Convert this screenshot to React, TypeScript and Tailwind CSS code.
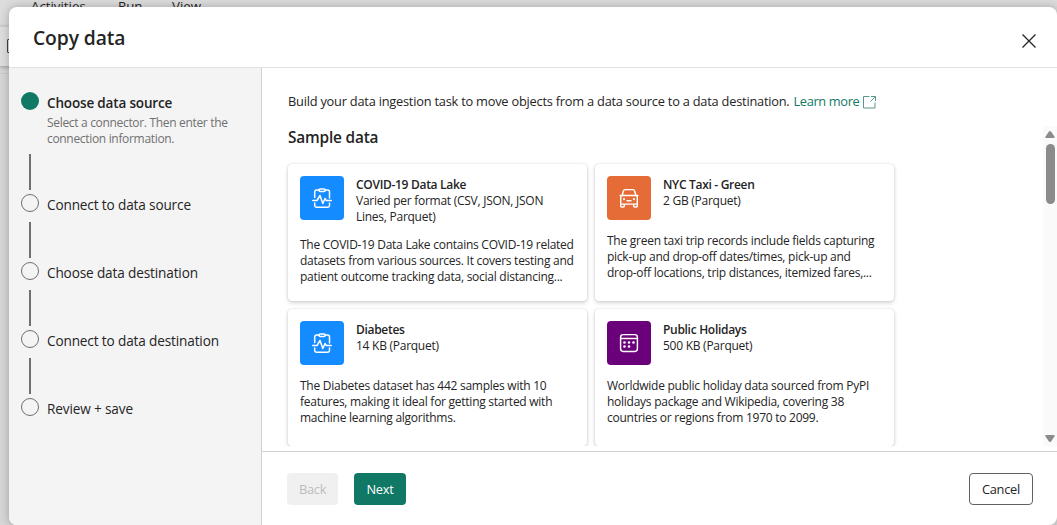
import React from "react";

function ClipboardPulse() {
  return (
    <svg width="20" height="20" viewBox="0 0 20 20" fill="none" stroke="white" strokeWidth="1.5" strokeLinejoin="round" strokeLinecap="round">
      <rect x="7" y="0.9" width="6.2" height="2.5" rx="1.2" />
      <path d="M7 2.100H4.500A1.800 1.800 0 0 0 2.700 3.900V9.500M13.200 2.100h2.500a1.800 1.800 0 0 1 1.800 1.800V10M2.700 15v2.500a1.700 1.700 0 0 0 1.700 1.700h11.400a1.700 1.700 0 0 0 1.700-1.700V15" />
      <path d="M.8 12.500h4.200L8 7.500l2.800 8 2.200-5 1.300 2h5" />
    </svg>
  );
}

function Taxi() {
  return (
    <svg width="20" height="20" viewBox="0 0 20 20" fill="none" stroke="white" strokeWidth="1.45" strokeLinejoin="round" strokeLinecap="round">
      <path d="M3.300 7 4.300 3.300A2.200 2.200 0 0 1 6.400 1.600h7.200A2.200 2.200 0 0 1 15.700 3.300l1 3.700M1.200 7.500h17.600M3.600 7.500A2 2 0 0 0 1.700 9.500V18a1 1 0 0 0 1 1h1.600a1 1 0 0 0 1-1v-1.900h9.400V18a1 1 0 0 0 1 1h1.600a1 1 0 0 0 1-1V9.500a2 2 0 0 0-1.900-2M1.700 16.100h16.600" />
      <path d="M8 12.700h4" />
      <circle cx="5" cy="11.200" r="1.100" fill="white" stroke="none" />
      <circle cx="15" cy="11.200" r="1.100" fill="white" stroke="none" />
    </svg>
  );
}

function Calendar() {
  return (
    <svg width="20" height="20" viewBox="0 0 20 20" fill="none" stroke="white" strokeWidth="1.45">
      <rect x="1.600" y="1.600" width="16.800" height="16.800" rx="2.600" />
      <path d="M1.600 5.500h16.800" />
      <g fill="white" stroke="none">
        <circle cx="5.500" cy="9.500" r="1.300" />
        <circle cx="10" cy="9.500" r="1.300" />
        <circle cx="14.500" cy="9.500" r="1.300" />
        <circle cx="5.500" cy="13.500" r="1.300" />
        <circle cx="10" cy="13.500" r="1.300" />
      </g>
    </svg>
  );
}

type Sample = { title: string; meta: string[]; body: string[]; tile: string; icon: React.ReactNode };

const samples: Sample[] = [
  {
    title: "COVID-19 Data Lake",
    meta: ["Varied per format (CSV, JSON, JSON", "Lines, Parquet)"],
    body: [
      "The COVID-19 Data Lake contains COVID-19 related",
      "datasets from various sources. It covers testing and",
      "patient outcome tracking data, social distancing...",
    ],
    tile: "bg-[#148cff]",
    icon: <ClipboardPulse />,
  },
  {
    title: "NYC Taxi - Green",
    meta: ["2 GB (Parquet)"],
    body: [
      "The green taxi trip records include fields capturing",
      "pick-up and drop-off dates/times, pick-up and",
      "drop-off locations, trip distances, itemized fares,...",
    ],
    tile: "bg-[#e66c37]",
    icon: <Taxi />,
  },
  {
    title: "Diabetes",
    meta: ["14 KB (Parquet)"],
    body: [
      "The Diabetes dataset has 442 samples with 10",
      "features, making it ideal for getting started with",
      "machine learning algorithms.",
    ],
    tile: "bg-[#148cff]",
    icon: <ClipboardPulse />,
  },
  {
    title: "Public Holidays",
    meta: ["500 KB (Parquet)"],
    body: [
      "Worldwide public holiday data sourced from PyPI",
      "holidays package and Wikipedia, covering 38",
      "countries or regions from 1970 to 2099.",
    ],
    tile: "bg-[#6b007b]",
    icon: <Calendar />,
  },
];

function Card({ title, meta, body, tile, icon }: Sample) {
  return (
    <article className="flex h-[137px] w-[299px] flex-col gap-[11px] rounded bg-white p-3 text-[12px] leading-4 tracking-[-0.26px] whitespace-nowrap shadow-[0_0_2px_rgba(0,0,0,0.16),0_2px_4px_rgba(0,0,0,0.16)]">
      <div className="flex gap-3">
        <div className={`mb-px flex size-11 shrink-0 items-center justify-center rounded ${tile}`}>{icon}</div>
        <div className="pt-px">
          <h3 className="font-semibold tracking-[-0.3px]">{title}</h3>
          {meta.map((m) => (
            <p key={m}>{m}</p>
          ))}
        </div>
      </div>
      <div className="pt-px">
        {body.map((b) => (
          <p key={b}>{b}</p>
        ))}
      </div>
    </article>
  );
}

function Step({ label }: { label: string }) {
  return (
    <li>
      <div className="ml-2 h-9 w-0.5 bg-[#707070]" />
      <div className="mt-1 mb-2 flex h-5 items-start gap-2">
        <span className="size-[18px] rounded-full border border-[#707070]" />
        <span className="text-[13.6px] leading-[22px] tracking-[-0.14px]">{label}</span>
      </div>
    </li>
  );
}

export default function App() {
  return (
    <div className="relative h-[525px] w-[1057px] overflow-hidden bg-[#d6d6d6] font-['Open_Sans','Noto_Sans',sans-serif] text-[#242424]">
      <div className="flex h-[26px] bg-[#dcdcdc] pl-[31px] text-[13.3px] leading-5">
        <div className="-mt-1 flex">
          <span className="w-[87px]">Activities</span>
          <span className="w-[54px]">Run</span>
          <span>View</span>
        </div>
      </div>
      <div className="h-10 border-t border-[#cccccc] bg-[#dedede] pt-3 pl-[7px] shadow-[0_1px_4px_rgba(0,0,0,0.3)]">
        <div className="h-[14px] w-4 rounded-[1px] border border-[#424242]" />
      </div>
      <div className="mt-[7px] h-px bg-[#cacaca]" />

      <section className="absolute top-[7px] left-[9px] flex h-[518px] w-[1048px] flex-col overflow-hidden rounded-lg bg-white shadow-[0_0_10px_rgba(0,0,0,0.25)]">
        <header className="flex h-[61px] shrink-0 items-start justify-between border-b border-[#e0e0e0] pr-[21px] pl-6">
          <h1 className="pt-[17px] text-[19.3px] leading-7 font-semibold tracking-[-0.1px]">Copy data</h1>
          <svg className="mt-[27px]" width="14" height="14" viewBox="0 0 14 14" stroke="#242424" strokeWidth="1.300">
            <path d="M.5.5l13 13M13.500.5l-13 13" />
          </svg>
        </header>

        <div className="flex min-h-0 flex-1">
          <aside className="w-[253px] shrink-0 border-r border-[#d1d1d1] bg-[#f4f4f4] pt-6 pl-3 whitespace-nowrap">
            <div className="flex h-[62px] gap-2">
              <span className="size-[18px] rounded-full bg-[#117865]" />
              <div>
                <p className="text-[13.5px] leading-[22px] font-semibold tracking-[-0.16px]">Choose data source</p>
                <p className="mt-px text-[12px] leading-4 tracking-[-0.32px] text-[#707070]">
                  Select a connector. Then enter the
                  <br />
                  connection information.
                </p>
              </div>
            </div>
            <ol>
              <Step label="Connect to data source" />
              <Step label="Choose data destination" />
              <Step label="Connect to data destination" />
              <Step label="Review + save" />
            </ol>
          </aside>

          <main className="flex min-w-0 flex-1 flex-col">
            <p className="flex h-[58px] shrink-0 items-start pt-[23px] pl-[26px] text-[12.8px] leading-5 tracking-[-0.22px] whitespace-nowrap">
              <span>Build your data ingestion task to move objects from a data source to a data destination.</span>
              <a className="ml-1 tracking-[-0.35px] text-[#117865]">Learn more</a>
              <svg className="mt-[5px] ml-1" width="13" height="13" viewBox="0 0 13 13" fill="none" stroke="#58978a">
                <path d="M6.500.5H.5v11.500H12V6.500M8 .5h4.500V5M12.500.5l-5 5" />
              </svg>
            </p>
            <div className="flex h-[320px] shrink-0">
              <div className="min-w-0 flex-1 overflow-hidden pl-[26px]">
                <h2 className="h-[38px] text-[15.4px] leading-[23px] font-semibold tracking-[-0.18px]">Sample data</h2>
                <div className="grid w-[606px] grid-cols-[299px_299px] gap-2">
                  {samples.map((s) => (
                    <Card key={s.title} {...s} />
                  ))}
                </div>
              </div>
              <div className="flex w-[14px] flex-col items-center bg-[#fafafa] pt-[5px] pb-1">
                <svg width="10" height="7" viewBox="0 0 10 7" fill="#8b8b8b">
                  <path d="M4 .6Q5-.5 6 .6L9.500 5.500Q10 7 9 7H1Q0 7 .5 5.500Z" />
                </svg>
                <div className="mt-1.5 h-[60px] w-[9px] rounded-full bg-[#8b8b8b]" />
                <svg className="mt-auto" width="10" height="7" viewBox="0 0 10 7" fill="#8b8b8b">
                  <path d="M4 6.400Q5 7.500 6 6.400L9.500 1.500Q10 0 9 0H1Q0 0 .5 1.500Z" />
                </svg>
              </div>
            </div>
            <footer className="mt-[5px] flex flex-1 items-start border-t border-[#d1d1d1] pt-[21px] pr-6 pl-[25px] text-[12.8px] tracking-[-0.25px]">
              <button className="h-8 w-[51px] rounded bg-[#f0f0f0] pt-0.5 text-[#bdbdbd]">Back</button>
              <button className="ml-4 h-8 w-[52px] rounded bg-[#117865] pt-0.5 text-white">Next</button>
              <button className="ml-auto h-8 w-16 rounded border border-[#616161] pt-0.5">Cancel</button>
            </footer>
          </main>
        </div>
      </section>
    </div>
  );
}
